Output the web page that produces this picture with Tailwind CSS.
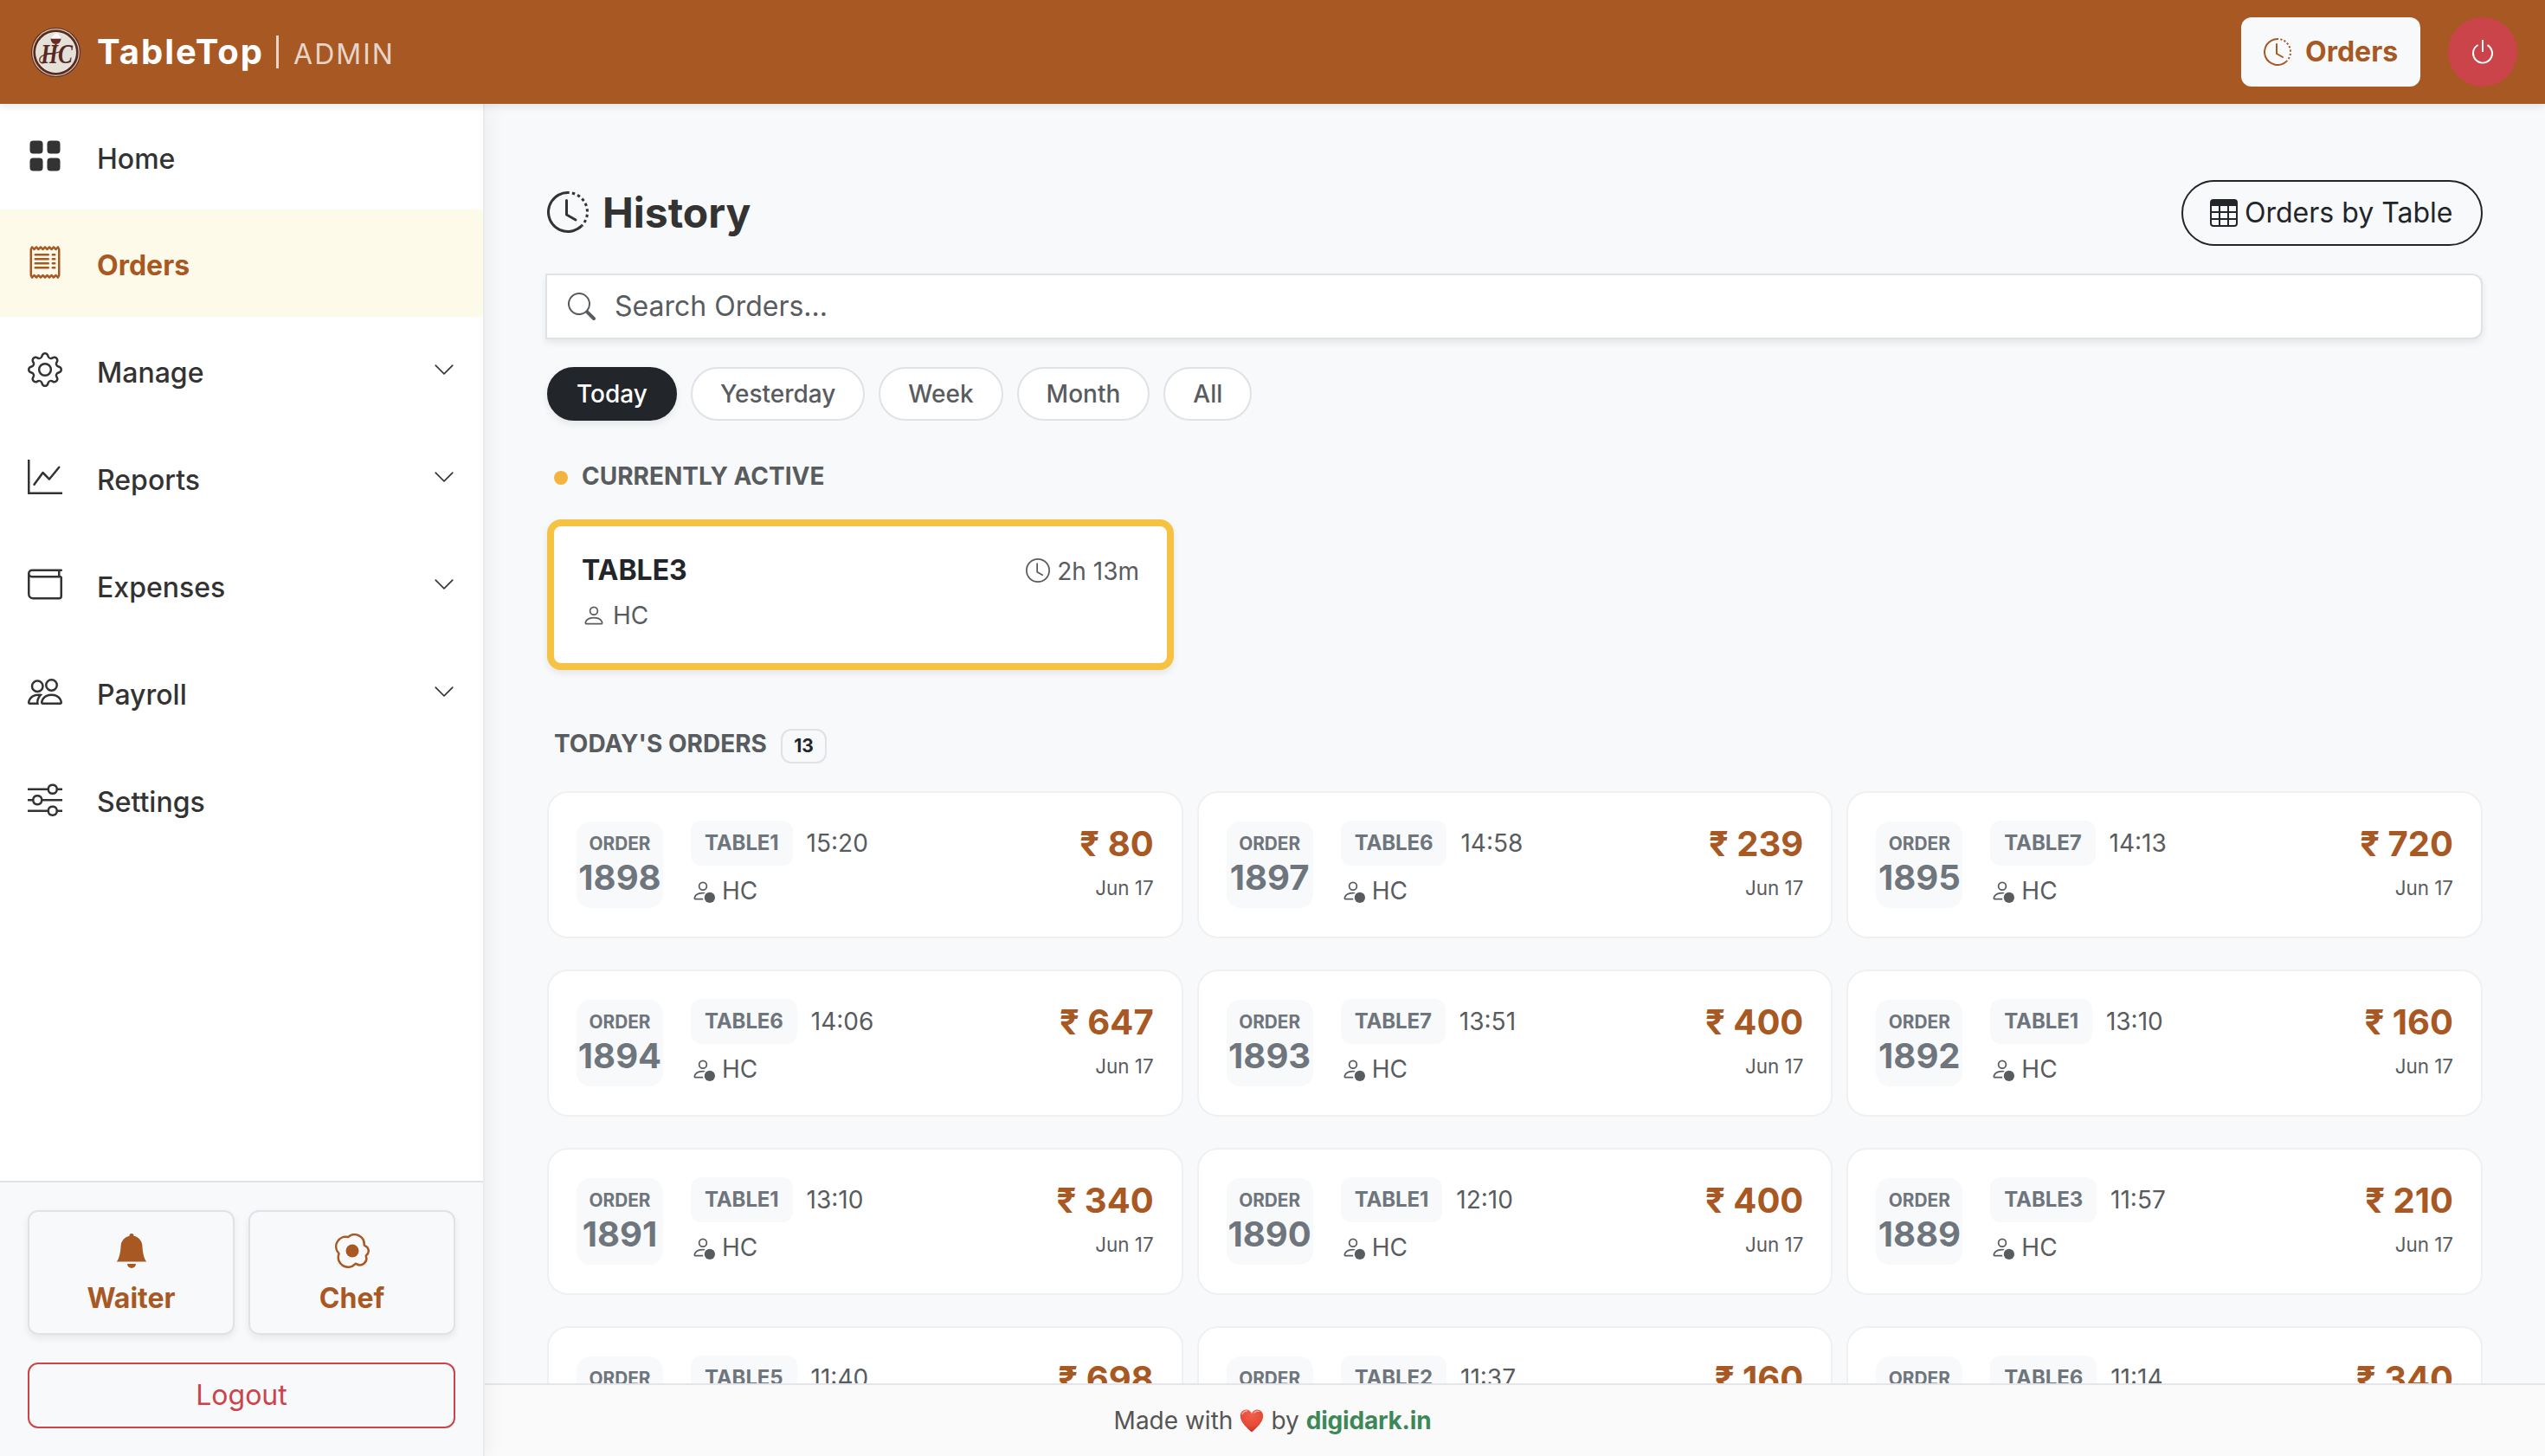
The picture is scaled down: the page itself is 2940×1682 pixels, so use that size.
<!DOCTYPE html>
<html lang="en">

<head>
  <meta charset="UTF-8">
  <title>TableTop | Admin</title>
  <script src="https://cdn.jsdelivr.net/npm/@tailwindcss/browser@4"></script>
</head>

<body class="h-[1682px] w-[2940px] overflow-hidden bg-[#f8f9fb] font-['Inter',sans-serif] text-[#22252a]">
  <!-- icon set -->
  <svg class="hidden">
    <symbol id="grid" viewBox="0 0 16 16">
      <rect x="1" y="1" width="6" height="6" rx="1.5" />
      <rect x="9" y="1" width="6" height="6" rx="1.5" />
      <rect x="1" y="9" width="6" height="6" rx="1.5" />
      <rect x="9" y="9" width="6" height="6" rx="1.5" />
    </symbol>
    <symbol id="receipt" viewBox="0 0 16 16">
      <path d="M1.92.506a.5.5 0 0 1 .434.14L3 1.293l.646-.647a.5.5 0 0 1 .708 0L5 1.293l.646-.647a.5.5 0 0 1 .708 0L7 1.293l.646-.647a.5.5 0 0 1 .708 0L9 1.293l.646-.647a.5.5 0 0 1 .708 0l.646.647.646-.647a.5.5 0 0 1 .708 0l.646.647.646-.647a.5.5 0 0 1 .801.13l.5 1A.5.5 0 0 1 15 2v12a.5.5 0 0 1-.053.224l-.5 1a.5.5 0 0 1-.8.13L13 14.707l-.646.647a.5.5 0 0 1-.708 0L11 14.707l-.646.647a.5.5 0 0 1-.708 0L9 14.707l-.646.647a.5.5 0 0 1-.708 0L7 14.707l-.646.647a.5.5 0 0 1-.708 0L5 14.707l-.646.647a.5.5 0 0 1-.708 0L3 14.707l-.646.647a.5.5 0 0 1-.801-.13l-.5-1A.5.5 0 0 1 1 14V2a.5.5 0 0 1 .053-.224l.5-1a.5.5 0 0 1 .367-.27m.217 1.338L2 2.118v11.764l.137.274.51-.51a.5.5 0 0 1 .707 0l.646.647.646-.646a.5.5 0 0 1 .708 0l.646.646.646-.646a.5.5 0 0 1 .708 0l.646.646.646-.646a.5.5 0 0 1 .708 0l.646.646.646-.646a.5.5 0 0 1 .708 0l.646.646.646-.646a.5.5 0 0 1 .708 0l.509.509.137-.274V2.118l-.137-.274-.51.51a.5.5 0 0 1-.707 0L12 1.707l-.646.647a.5.5 0 0 1-.708 0L10 1.707l-.646.647a.5.5 0 0 1-.708 0L8 1.707l-.646.647a.5.5 0 0 1-.708 0L6 1.707l-.646.647a.5.5 0 0 1-.708 0L4 1.707l-.646.647a.5.5 0 0 1-.708 0z" />
      <path d="M3 4.5a.5.5 0 0 1 .5-.5h6a.5.5 0 1 1 0 1h-6a.5.5 0 0 1-.5-.5m0 2a.5.5 0 0 1 .5-.5h6a.5.5 0 1 1 0 1h-6a.5.5 0 0 1-.5-.5m0 2a.5.5 0 0 1 .5-.5h6a.5.5 0 1 1 0 1h-6a.5.5 0 0 1-.5-.5m0 2a.5.5 0 0 1 .5-.5h6a.5.5 0 0 1 0 1h-6a.5.5 0 0 1-.5-.5m8-6a.5.5 0 0 1 .5-.5h1a.5.5 0 0 1 0 1h-1a.5.5 0 0 1-.5-.5m0 2a.5.5 0 0 1 .5-.5h1a.5.5 0 0 1 0 1h-1a.5.5 0 0 1-.5-.5m0 2a.5.5 0 0 1 .5-.5h1a.5.5 0 0 1 0 1h-1a.5.5 0 0 1-.5-.5m0 2a.5.5 0 0 1 .5-.5h1a.5.5 0 0 1 0 1h-1a.5.5 0 0 1-.5-.5" />
    </symbol>
    <symbol id="gear" viewBox="0 0 16 16">
      <path d="M8 4.754a3.246 3.246 0 1 0 0 6.492 3.246 3.246 0 0 0 0-6.492M5.754 8a2.246 2.246 0 1 1 4.492 0 2.246 2.246 0 0 1-4.492 0" />
      <path d="M9.796 1.343c-.527-1.79-3.065-1.79-3.592 0l-.094.319a.873.873 0 0 1-1.255.52l-.292-.16c-1.64-.892-3.433.902-2.54 2.541l.159.292a.873.873 0 0 1-.52 1.255l-.319.094c-1.79.527-1.79 3.065 0 3.592l.319.094a.873.873 0 0 1 .52 1.255l-.16.292c-.892 1.64.901 3.434 2.541 2.54l.292-.159a.873.873 0 0 1 1.255.52l.094.319c.527 1.79 3.065 1.79 3.592 0l.094-.319a.873.873 0 0 1 1.255-.52l.292.16c1.64.893 3.434-.902 2.54-2.541l-.159-.292a.873.873 0 0 1 .52-1.255l.319-.094c1.79-.527 1.79-3.065 0-3.592l-.319-.094a.873.873 0 0 1-.52-1.255l.16-.292c.893-1.64-.902-3.433-2.541-2.54l-.292.159a.873.873 0 0 1-1.255-.52zm-2.633.283c.246-.835 1.428-.835 1.674 0l.094.319a1.873 1.873 0 0 0 2.693 1.115l.291-.16c.764-.415 1.6.42 1.184 1.185l-.159.292a1.873 1.873 0 0 0 1.116 2.692l.318.094c.835.246.835 1.428 0 1.674l-.319.094a1.873 1.873 0 0 0-1.115 2.693l.16.291c.415.764-.42 1.6-1.185 1.184l-.291-.159a1.873 1.873 0 0 0-2.693 1.116l-.094.318c-.246.835-1.428.835-1.674 0l-.094-.319a1.873 1.873 0 0 0-2.692-1.115l-.292.16c-.764.415-1.6-.42-1.184-1.185l.159-.291A1.873 1.873 0 0 0 1.945 8.93l-.319-.094c-.835-.246-.835-1.428 0-1.674l.319-.094A1.873 1.873 0 0 0 3.06 4.377l-.16-.292c-.415-.764.42-1.6 1.185-1.184l.292.159a1.873 1.873 0 0 0 2.692-1.115z" />
    </symbol>
    <symbol id="graph" viewBox="0 0 16 16">
      <path d="M0 0h1v15h15v1H0zm14.817 3.113a.5.5 0 0 1 .07.704l-4.5 5.5a.5.5 0 0 1-.74.037L7.06 6.767l-3.656 5.027a.5.5 0 0 1-.808-.588l4-5.5a.5.5 0 0 1 .758-.06l2.609 2.61 4.15-5.073a.5.5 0 0 1 .704-.07" />
    </symbol>
    <symbol id="wallet" viewBox="0 0 16 16">
      <path d="M0 3a2 2 0 0 1 2-2h13.5a.5.5 0 0 1 0 1H15v2a1 1 0 0 1 1 1v8.5a1.5 1.5 0 0 1-1.5 1.5h-12A2.5 2.5 0 0 1 0 12.5zm1 1.732V12.5A1.5 1.5 0 0 0 2.5 14h12a.5.5 0 0 0 .5-.5V5H2a2 2 0 0 1-1-.268M1 3a1 1 0 0 0 1 1h12V2H2a1 1 0 0 0-1 1" />
    </symbol>
    <symbol id="people" viewBox="0 0 16 16">
      <path d="M15 14s1 0 1-1-1-4-5-4-5 3-5 4 1 1 1 1zm-7.978-1L7 12.996c.001-.264.167-1.03.76-1.72C8.312 10.629 9.282 10 11 10c1.717 0 2.687.63 3.24 1.276.593.69.758 1.457.76 1.72l-.008.002-.014.002zM11 7a2 2 0 1 0 0-4 2 2 0 0 0 0 4m3-2a3 3 0 1 1-6 0 3 3 0 0 1 6 0M6.936 9.28a6 6 0 0 0-1.23-.247A7 7 0 0 0 5 9c-4 0-5 3-5 4q0 1 1 1h4.216A2.24 2.24 0 0 1 5 13c0-1.01.377-2.042 1.09-2.904.243-.294.526-.569.846-.816M4.92 10A5.5 5.5 0 0 0 4 13H1c0-.26.164-1.03.76-1.724.545-.636 1.492-1.256 3.16-1.275ZM1.5 5.5a3 3 0 1 1 6 0 3 3 0 0 1-6 0m3-2a2 2 0 1 0 0 4 2 2 0 0 0 0-4" />
    </symbol>
    <symbol id="sliders" viewBox="0 0 16 16">
      <path fill-rule="evenodd" d="M11.5 2a1.5 1.5 0 1 0 0 3 1.5 1.5 0 0 0 0-3M9.05 3a2.5 2.5 0 0 1 4.9 0H16v1h-2.05a2.5 2.5 0 0 1-4.9 0H0V3zM4.5 7a1.5 1.5 0 1 0 0 3 1.5 1.5 0 0 0 0-3M2.05 8a2.5 2.5 0 0 1 4.9 0H16v1H6.95a2.5 2.5 0 0 1-4.9 0H0V8zm9.45 4a1.5 1.5 0 1 0 0 3 1.5 1.5 0 0 0 0-3m-2.45 1a2.5 2.5 0 0 1 4.9 0H16v1h-2.05a2.5 2.5 0 0 1-4.9 0H0v-1z" />
    </symbol>
    <symbol id="chevron" viewBox="0 0 16 16">
      <path d="M1.646 4.646a.5.5 0 0 1 .708 0L8 10.293l5.646-5.647a.5.5 0 0 1 .708.708l-6 6a.5.5 0 0 1-.708 0l-6-6a.5.5 0 0 1 0-.708" />
    </symbol>
    <symbol id="history" viewBox="0 0 16 16">
      <path d="M8.515 1.019A7 7 0 0 0 8 1V0a8 8 0 0 1 .589.022zm2.004.45a7 7 0 0 0-.985-.299l.219-.976q.576.129 1.126.342zm1.37.71a7 7 0 0 0-.439-.27l.493-.87a8 8 0 0 1 .979.654l-.615.789a7 7 0 0 0-.418-.302zm1.834 1.79a7 7 0 0 0-.653-.796l.724-.69q.406.429.747.91zm.744 1.352a7 7 0 0 0-.214-.468l.893-.45a8 8 0 0 1 .45 1.088l-.95.313a7 7 0 0 0-.179-.483m.53 2.507a7 7 0 0 0-.1-1.025l.985-.17q.1.58.116 1.17zm-.131 1.538q.05-.254.081-.51l.993.123a8 8 0 0 1-.23 1.155l-.964-.267q.069-.247.12-.501m-.952 2.379q.276-.436.486-.908l.914.405q-.24.54-.555 1.038zm-.964 1.205q.183-.183.35-.378l.758.653a8 8 0 0 1-.401.432z" />
      <path d="M8 1a7 7 0 1 0 4.95 11.95l.707.707A8.001 8.001 0 1 1 8 0z" />
      <path d="M7.5 3a.5.5 0 0 1 .5.5v5.21l3.248 1.856a.5.5 0 0 1-.496.868l-3.5-2A.5.5 0 0 1 7 9V3.5a.5.5 0 0 1 .5-.5" />
    </symbol>
    <symbol id="power" viewBox="0 0 16 16">
      <path d="M7.5 1v7h1V1z" />
      <path d="M3 8.812a5 5 0 0 1 2.578-4.375l-.485-.874A6 6 0 1 0 11 3.616l-.501.865A5 5 0 1 1 3 8.812" />
    </symbol>
    <symbol id="table" viewBox="0 0 16 16">
      <path d="M0 2a2 2 0 0 1 2-2h12a2 2 0 0 1 2 2v12a2 2 0 0 1-2 2H2a2 2 0 0 1-2-2zm15 2h-4v3h4zm0 4h-4v3h4zm0 4h-4v3h3a1 1 0 0 0 1-1zm-5 3v-3H6v3zm-5 0v-3H1v2a1 1 0 0 0 1 1zm-4-4h4V8H1zm0-4h4V4H1zm5-3v3h4V4zm4 4H6v3h4z" />
    </symbol>
    <symbol id="search" viewBox="0 0 16 16">
      <path d="M11.742 10.344a6.5 6.5 0 1 0-1.397 1.398h-.001q.044.06.098.115l3.85 3.85a1 1 0 0 0 1.415-1.414l-3.85-3.85a1 1 0 0 0-.115-.1zM12 6.5a5.5 5.5 0 1 1-11 0 5.5 5.5 0 0 1 11 0" />
    </symbol>
    <symbol id="clock" viewBox="0 0 16 16">
      <path d="M8 3.5a.5.5 0 0 0-1 0V9a.5.5 0 0 0 .252.434l3.5 2a.5.5 0 0 0 .496-.868L8 8.71z" />
      <path d="M8 16A8 8 0 1 0 8 0a8 8 0 0 0 0 16m7-8A7 7 0 1 1 1 8a7 7 0 0 1 14 0" />
    </symbol>
    <symbol id="person" viewBox="0 0 16 16">
      <path d="M8 8a3 3 0 1 0 0-6 3 3 0 0 0 0 6m2-3a2 2 0 1 1-4 0 2 2 0 0 1 4 0m4 8c0 1-1 1-1 1H3s-1 0-1-1 1-4 6-4 6 3 6 4m-1-.004c-.001-.246-.154-.986-.832-1.664C11.516 10.68 10.289 10 8 10s-3.516.68-4.168 1.332c-.678.678-.83 1.418-.832 1.664z" />
    </symbol>
    <symbol id="person-dot" viewBox="0 0 16 16">
      <path d="M11 5a3 3 0 1 1-6 0 3 3 0 0 1 6 0M8 7a2 2 0 1 0 0-4 2 2 0 0 0 0 4m.256 7a4.5 4.5 0 0 1-.229-1.004H3c.001-.246.154-.986.832-1.664C4.484 10.68 5.711 10 8 10q.39 0 .74.025c.226-.341.496-.65.804-.918Q8.844 9.002 8 9c-5 0-6 3-6 4s1 1 1 1z" />
      <circle cx="12.5" cy="12.5" r="3.5" />
    </symbol>
    <symbol id="bell" viewBox="0 0 16 16">
      <path d="M8 16a2 2 0 0 0 2-2H6a2 2 0 0 0 2 2m.995-14.901a1 1 0 1 0-1.99 0A5 5 0 0 0 3 6c0 1.098-.5 6-2 7h14c-1.5-1-2-5.902-2-7 0-2.42-1.72-4.44-4.005-4.901" />
    </symbol>
    <symbol id="egg" viewBox="0 0 16 16">
      <path d="M8 11a3 3 0 1 0 0-6 3 3 0 0 0 0 6" />
      <path d="M13.997 5.17a5 5 0 0 0-8.101-4.09A5 5 0 0 0 1.28 9.342a5 5 0 0 0 8.336 5.109 3.5 3.5 0 0 0 5.201-4.065 3.001 3.001 0 0 0-.822-5.216zm-1-.034a1 1 0 0 0 .668.977 2.001 2.001 0 0 1 .547 3.478 1 1 0 0 0-.341 1.113 2.5 2.5 0 0 1-3.715 2.905 1 1 0 0 0-1.262.152 4 4 0 0 1-6.67-4.087 1 1 0 0 0-.2-1 4 4 0 0 1 3.693-6.61 1 1 0 0 0 .8-.2 4 4 0 0 1 6.48 3.273z" />
    </symbol>
  </svg>

  <header class="relative z-30 flex h-[120px] items-center justify-between bg-[#a75823] pr-8 pl-9 shadow-[0_4px_8px_rgba(0,0,0,0.08)]">
    <div class="flex items-center text-white">
      <svg class="size-[57px]" viewBox="0 0 56 56">
        <circle cx="28" cy="28" r="28" fill="#5a2c20" />
        <circle cx="28" cy="28" r="26.3" fill="none" stroke="#d9c8ba" stroke-width="1.2" />
        <circle cx="28" cy="28" r="22.5" fill="#e4e1d8" stroke="#f1ece4" stroke-width="1" />
        <path d="M22 12.5h12q-1 5.5-4.500 6h-3q-3.5-.5-4.500-6" fill="#6b2a22" />
        <path d="M23.5 12q-1-3 2-3 1-3 3-2.500 3-.5 3 2.500 3 0 1.500 3z" fill="#fff" />
        <path d="M28 18v5" stroke="#57291f" stroke-width="2" />
        <text x="29" y="40.5" text-anchor="middle" font-family="Liberation Serif" font-style="italic" font-weight="700" font-size="30" textLength="36" lengthAdjust="spacingAndGlyphs" fill="#57291f">HC</text>
        <path d="M9.500 37q0-6 9.500-7t14-3" fill="none" stroke="#57291f" stroke-width="1.2" />
        <path d="M9.500 37q1 5 7 2" fill="none" stroke="#57291f" stroke-width="1.2" />
      </svg>
      <span class="ml-[19px] text-[40px] leading-[60px] font-bold tracking-[2px]">TableTop</span>
      <span class="ml-[14px] h-[38px] w-[3px] bg-white/75"></span>
      <span class="ml-[17px] pt-[5px] text-[32px] tracking-[2px] text-white/75">ADMIN</span>
    </div>
    <div class="flex items-center gap-8">
      <button class="flex h-20 w-[207px] items-center rounded-xl bg-[#f8f9fb] pl-[26px] text-[32px] font-bold text-[#a75823]">
        <svg class="size-8 fill-current"><use href="#history" /></svg>
        <span class="ml-4">Orders</span>
      </button>
      <button class="flex size-20 items-center justify-center rounded-full bg-[#cb444a] text-white">
        <svg class="size-8 fill-current"><use href="#power" /></svg>
      </button>
    </div>
  </header>

  <div class="flex h-[1562px]">
    <aside class="relative z-20 flex w-[560px] shrink-0 flex-col border-r-2 border-[#e9ebee] bg-white shadow-[4px_0_20px_rgba(0,0,0,0.05)]">
      <nav id="menu" class="flex-1 text-[32px] font-medium text-[#333]"></nav>
      <div class="h-[318px] border-t-2 border-[#dfe2e6] bg-[#f8f9fb] px-8 pt-8">
        <div class="grid grid-cols-2 gap-4 text-[32px] font-bold text-[#a75823]">
          <button class="flex h-36 flex-col items-center rounded-xl border-2 border-[#dfe2e6] pt-[25px] shadow-[0_4px_8px_rgba(0,0,0,0.07)]">
            <svg class="size-10 fill-current"><use href="#bell" /></svg>
            <span class="mt-[11px] leading-[48px]">Waiter</span>
          </button>
          <button class="flex h-36 flex-col items-center rounded-xl border-2 border-[#dfe2e6] pt-[25px] shadow-[0_4px_8px_rgba(0,0,0,0.07)]">
            <svg class="size-10 fill-current"><use href="#egg" /></svg>
            <span class="mt-[11px] leading-[48px]">Chef</span>
          </button>
        </div>
        <button class="mt-8 h-[76px] w-full rounded-xl border-2 border-[#cb444a] text-[32px] text-[#cb444a]">Logout</button>
      </div>
    </aside>

    <div class="flex min-w-0 flex-1 flex-col">
      <main class="min-h-0 flex-1 overflow-hidden px-[72px]">
        <div class="mt-[88px] flex h-[76px] items-center justify-between">
          <h1 class="flex items-center text-[48px] leading-[58px] font-bold text-[#333]">
            <svg class="mr-4 mb-[2px] size-12 fill-current"><use href="#history" /></svg>History
          </h1>
          <button class="flex h-[76px] w-[348px] items-center rounded-full border-2 border-[#22252a] pl-[31px] text-[32px]">
            <svg class="mr-2 size-8 fill-current"><use href="#table" /></svg>Orders by Table
          </button>
        </div>

        <div class="mt-8 -ml-[2px] flex h-[76px] items-center rounded-r-xl border-2 border-[#dfe2e6] bg-white pl-6 text-[32px] text-[#595c5f] shadow-[0_4px_8px_rgba(0,0,0,0.08)]">
          <svg class="mr-[22px] size-8 fill-current"><use href="#search" /></svg>Search Orders...
        </div>

        <div class="mt-8 flex gap-4 text-[28px] font-medium text-[#595c5f]">
          <button class="h-[62px] rounded-full border-2 border-[#22252a] bg-[#22252a] px-8 text-white shadow-[0_4px_8px_rgba(0,0,0,0.08)]">Today</button>
          <button class="h-[62px] rounded-full border-2 border-[#dfe2e6] bg-white px-8">Yesterday</button>
          <button class="h-[62px] rounded-full border-2 border-[#dfe2e6] bg-white px-8">Week</button>
          <button class="h-[62px] rounded-full border-2 border-[#dfe2e6] bg-white px-8">Month</button>
          <button class="h-[62px] rounded-full border-2 border-[#dfe2e6] bg-white px-8">All</button>
        </div>

        <h2 class="mt-[43px] flex items-center pl-2 text-[28px] leading-[42px] font-bold text-[#595c5f]">
          <span class="mt-1 mr-4 size-4 rounded-full bg-[#f3b33f]"></span>CURRENTLY ACTIVE
        </h2>
        <div class="mt-[29px] h-[174px] w-[724px] rounded-2xl border-8 border-[#f5c244] bg-white px-8 pt-[27px] shadow-[0_4px_8px_rgba(0,0,0,0.08)]">
          <div class="flex items-center justify-between">
            <span class="text-[32px] leading-[48px] font-bold">TABLE3</span>
            <span class="mt-[2px] flex items-center text-[28px] leading-[42px] text-[#595c5f]">
              <svg class="mr-2 mb-[2px] size-7 fill-current"><use href="#clock" /></svg>2h 13m
            </span>
          </div>
          <div class="mt-[7px] flex items-center text-[28px] leading-[42px] text-[#595c5f]">
            <svg class="mr-2 size-7 fill-current"><use href="#person" /></svg>HC
          </div>
        </div>

        <h2 class="mt-[61px] flex h-[48px] items-center pl-2 text-[28px] leading-[42px] font-bold text-[#595c5f]">
          TODAY'S ORDERS
          <span class="mt-[6px] ml-4 flex h-10 w-[53px] items-center justify-center rounded-xl border-2 border-[#dfe2e6] text-[21px] font-bold text-[#22252a]">13</span>
        </h2>
        <div id="orders" class="mt-[31px] grid grid-cols-3 gap-x-4 gap-y-9"></div>
      </main>

      <footer class="flex h-[84px] shrink-0 items-center justify-center border-t-2 border-[#e4e5e9] bg-[#fafafa] pr-[560px] text-[28px] text-[#555]">
        Made with
        <svg class="mx-2 size-7" viewBox="0 0 28 28">
          <defs>
            <radialGradient id="heart" cx=".5" cy=".25" r=".8">
              <stop offset="0" stop-color="#f0604a" />
              <stop offset=".6" stop-color="#e64a38" />
              <stop offset="1" stop-color="#bf2a1e" />
            </radialGradient>
          </defs>
          <path d="M14 27.5C9 23 .8 16.5.8 8.8.8 4.5 4 1.5 7.6 1.5c2.9 0 5.3 1.7 6.4 4.5 1.1-2.8 3.5-4.5 6.4-4.5 3.6 0 6.8 3 6.8 7.3C27.2 16.5 19 23 14 27.5" fill="url(#heart)" />
          <path d="M3 6.5Q5 2.8 8.5 3M17 5q2-2.5 5.5-1.5" fill="none" stroke="#f8b3a4" stroke-width="1.3" stroke-linecap="round" />
        </svg>
        by <a class="ml-2 font-bold tracking-[-0.2px] text-[#3c8859]">digidark.in</a>
      </footer>
    </div>
  </div>

  <script>
    const menu = [
      ["grid", "Home", false],
      ["receipt", "Orders", false],
      ["gear", "Manage", true],
      ["graph", "Reports", true],
      ["wallet", "Expenses", true],
      ["people", "Payroll", true],
      ["sliders", "Settings", false],
    ];
    document.getElementById("menu").innerHTML = menu.map(([icon, label, open]) => `
      <a class="flex h-[124px] items-center pr-8 pl-8 first:h-[122px] ${label === "Orders" ? "bg-[#fefaea] font-bold text-[#a75823]" : ""}">
        <svg class="mb-[2px] size-10 fill-current"><use href="#${icon}" /></svg>
        <span class="mt-[5px] ml-10 flex-1">${label}</span>
        ${open ? `<svg class="mb-[2px] size-[26px] fill-current"><use href="#chevron" /></svg>` : ""}
      </a>`).join("");

    const orders = [
      [1898, "TABLE1", "15:20", 80],
      [1897, "TABLE6", "14:58", 239],
      [1895, "TABLE7", "14:13", 720],
      [1894, "TABLE6", "14:06", 647],
      [1893, "TABLE7", "13:51", 400],
      [1892, "TABLE1", "13:10", 160],
      [1891, "TABLE1", "13:10", 340],
      [1890, "TABLE1", "12:10", 400],
      [1889, "TABLE3", "11:57", 210],
      [1888, "TABLE5", "11:40", 698],
      [1887, "TABLE2", "11:37", 160],
      [1886, "TABLE6", "11:14", 340],
    ];
    document.getElementById("orders").innerHTML = orders.map(([no, table, time, total]) => `
      <div class="flex h-[170px] items-center rounded-3xl border-2 border-[#f0f0f1] bg-white px-8">
        <div class="flex size-[100px] shrink-0 flex-col items-center rounded-2xl bg-[#f8f9fb] pt-[10px] font-bold text-[#6e757c]">
          <span class="text-[20.8px] leading-[31px]">ORDER</span>
          <span class="mt-1 text-[40px] leading-[40px]">${no}</span>
        </div>
        <div class="ml-8 flex-1">
          <div class="flex items-center">
            <span class="rounded-xl bg-[#f8f9fb] px-4 text-[24px] leading-[52px] font-bold tracking-[-0.1px] text-[#6e757c]">${table}</span>
            <span class="ml-4 text-[28px] text-[#595c5f]">${time}</span>
          </div>
          <div class="mt-2 flex items-center text-[28px] leading-[42px] text-[#595c5f]">
            <svg class="mr-2 size-7 fill-current"><use href="#person-dot" /></svg>HC
          </div>
        </div>
        <div class="mb-[5px] text-right">
          <div class="text-[40px] leading-[48px] font-bold text-[#a75823]">₹ ${total}</div>
          <div class="mt-[10px] text-[22.4px] leading-[34px] text-[#595c5f]">Jun 17</div>
        </div>
      </div>`).join("");
  </script>
</body>

</html>
